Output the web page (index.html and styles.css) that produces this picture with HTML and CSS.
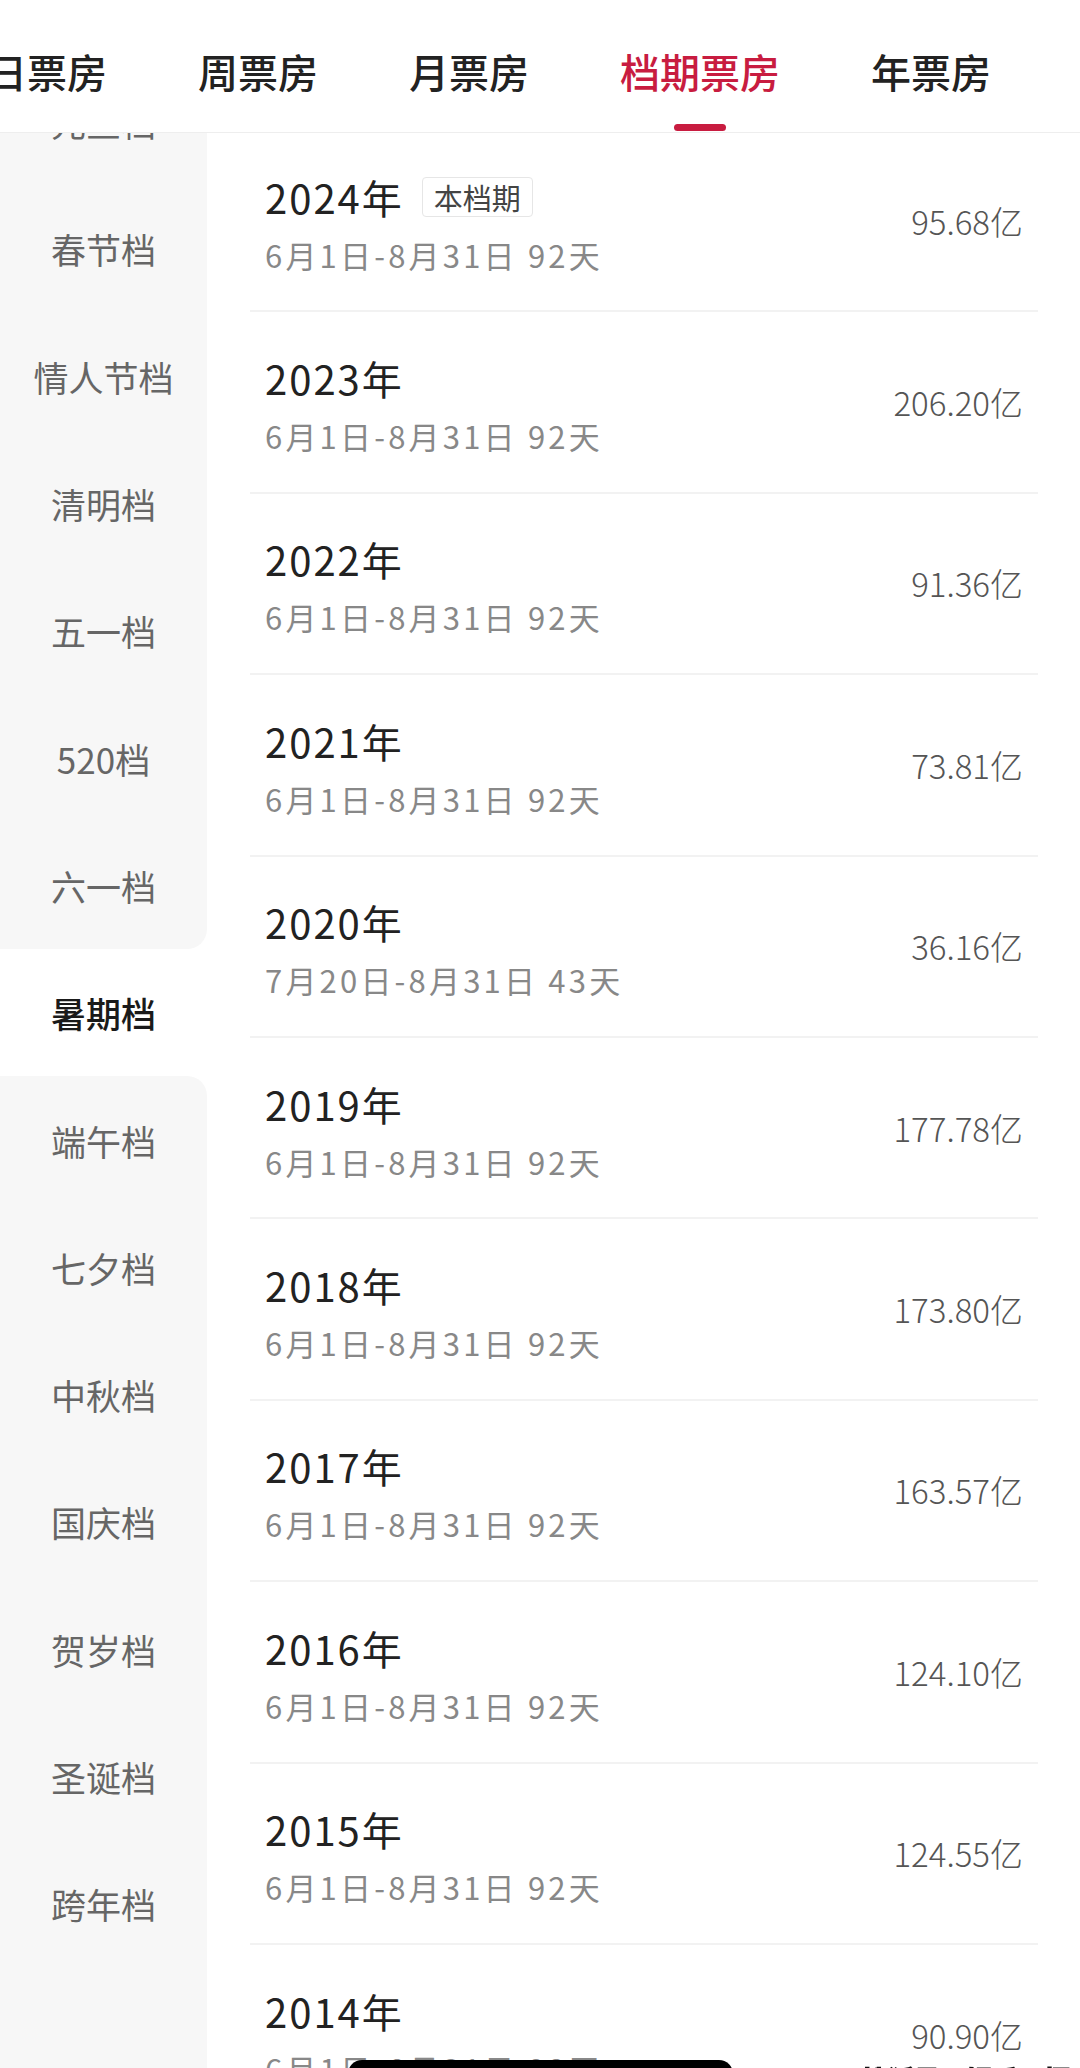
FILE: index.html
```html
<!DOCTYPE html>
<html lang="zh-CN">
<head>
  <meta charset="UTF-8" />
  <meta name="viewport" content="width=device-width, initial-scale=1.0"/>
  <title>档期票房</title>
  <link rel="stylesheet" href="styles.css">
</head>
<body>
  <header class="tabs">
    <div class="tab">日票房</div>
    <div class="tab">周票房</div>
    <div class="tab">月票房</div>
    <div class="tab active">档期票房</div>
    <div class="tab">年票房</div>
  </header>

  <div class="page">
    <div class="side" id="side"></div>
    <div class="list" id="list"></div>
  </div>

  <div class="watermark">搜狐号@娱乐星探</div>
  <div class="home-bar"></div>

  <script>
    const periods = ["元旦档", "春节档", "情人节档", "清明档", "五一档", "520档", "六一档",
      "暑期档", "端午档", "七夕档", "中秋档", "国庆档", "贺岁档", "圣诞档", "跨年档"];
    const current = "暑期档";

    const years = [
      { year: "2024", range: "6月1日-8月31日 92天", total: "95.68亿", now: true },
      { year: "2023", range: "6月1日-8月31日 92天", total: "206.20亿" },
      { year: "2022", range: "6月1日-8月31日 92天", total: "91.36亿" },
      { year: "2021", range: "6月1日-8月31日 92天", total: "73.81亿" },
      { year: "2020", range: "7月20日-8月31日 43天", total: "36.16亿" },
      { year: "2019", range: "6月1日-8月31日 92天", total: "177.78亿" },
      { year: "2018", range: "6月1日-8月31日 92天", total: "173.80亿" },
      { year: "2017", range: "6月1日-8月31日 92天", total: "163.57亿" },
      { year: "2016", range: "6月1日-8月31日 92天", total: "124.10亿" },
      { year: "2015", range: "6月1日-8月31日 92天", total: "124.55亿" },
      { year: "2014", range: "6月1日-8月31日 92天", total: "90.90亿" }
    ];

    function renderSide() {
      const idx = periods.indexOf(current);
      let html = "";
      periods.forEach((p, i) => {
        let cls = "side-item";
        if (i === idx) cls += " active";
        if (i === idx - 1) cls += " before";
        if (i === idx + 1) cls += " after";
        html += `<div class="${cls}">${p}</div>`;
      });
      html += '<div class="side-rest"></div>';
      document.getElementById("side").innerHTML = html;
    }

    function renderList() {
      let html = "";
      years.forEach(r => {
        const tag = r.now ? '<span class="tag">本档期</span>' : "";
        html += `<div class="row">
          <div class="info">
            <div class="year">${r.year}年${tag}</div>
            <div class="range">${r.range}</div>
          </div>
          <div class="total">${r.total}</div>
        </div>`;
      });
      document.getElementById("list").innerHTML = html;
    }

    renderSide();
    renderList();
  </script>
</body>
</html>
```

FILE: styles.css
```css
html, body { height: 100%; }
body {
  margin: 0;
  background: #fff;
  color: #222;
  font-family: "Noto Sans CJK SC", "Noto Sans", sans-serif;
  overflow: hidden;
}

/* top tabs */
.tabs {
  position: relative;
  z-index: 2;
  height: 132px;
  display: flex;
  gap: 91px;
  margin-left: -13px;
  background: #fff;
  border-bottom: 1px solid #eee;
}
.tab {
  position: relative;
  display: flex;
  align-items: center;
  padding-top: 10px;
  font-size: 40px;
  font-weight: 500;
  color: #222;
  white-space: nowrap;
}
.tab.active { color: #c81c40; }
.tab.active::after {
  content: "";
  position: absolute;
  left: 50%;
  bottom: 1px;
  width: 52px;
  height: 7px;
  margin-left: -26px;
  border-radius: 4px;
  background: #c81c40;
}

.page {
  display: flex;
  height: calc(100% - 133px);
}

/* left menu */
.side {
  width: 207px;
  flex-shrink: 0;
  display: flex;
  flex-direction: column;
  margin-top: -75px;
  background: #fff;
}
.side-item {
  height: 127.3px;
  flex-shrink: 0;
  display: flex;
  align-items: center;
  justify-content: center;
  font-size: 35px;
  color: #666;
  background: #f7f7f7;
}
.side-item.active { background: #fff; color: #1a1a1a; font-weight: 500; }
.side-item.before { border-bottom-right-radius: 20px; }
.side-item.after { border-top-right-radius: 20px; }
.side-rest { flex: 1; background: #f7f7f7; }

/* right list */
.list {
  flex: 1;
  padding: 0 42px 0 43px;
  margin-top: -2px;
}
.row {
  box-sizing: border-box;
  height: 181.4px;
  display: flex;
  align-items: center;
  justify-content: space-between;
  padding: 0 15px;
  border-bottom: 2px solid #f2f2f2;
}
.info { padding-top: 6px; }
.year {
  display: flex;
  align-items: center;
  height: 48px;
  font-size: 40px;
  letter-spacing: 2px;
  color: #222;
}
.tag {
  margin-left: 18px;
  padding: 0 11px;
  height: 38px;
  line-height: 38px;
  font-size: 29px;
  letter-spacing: 0;
  color: #444;
  border: 1px solid #e6e6e6;
  border-radius: 4px;
}
.range {
  margin-top: 14px;
  height: 40px;
  line-height: 40px;
  font-size: 31px;
  letter-spacing: 3.2px;
  color: #888;
}
.total {
  font-size: 33px;
  font-weight: 300;
  color: #555;
  white-space: nowrap;
}

/* overlays at the bottom edge */
.watermark {
  position: fixed;
  left: 862px;
  bottom: -31px;
  font-size: 26px;
  font-weight: 700;
  line-height: 40px;
  color: #fff;
  white-space: nowrap;
  -webkit-text-stroke: 1.5px #111;
}
.home-bar {
  position: fixed;
  left: 348px;
  bottom: -20px;
  width: 385px;
  height: 28px;
  border-radius: 14px;
  background: #000;
}
```
